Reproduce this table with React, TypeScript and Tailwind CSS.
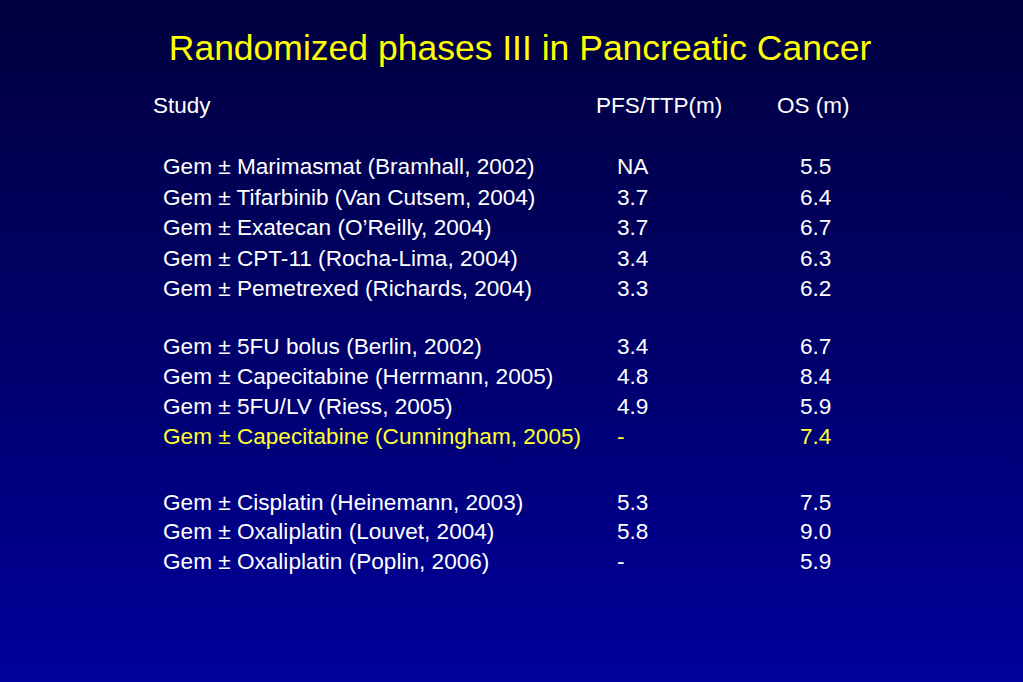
import React from 'react';

type Row = {
  study: string;
  pfs: string;
  os: string;
  highlight?: boolean;
};

const groups: { rows: Row[]; gap: string; rowH: string }[] = [
  {
    gap: 'mt-[31px]',
    rowH: 'h-[30.5px] leading-[30.5px]',
    rows: [
      { study: 'Gem ± Marimasmat (Bramhall, 2002)', pfs: 'NA', os: '5.5' },
      { study: 'Gem ± Tifarbinib (Van Cutsem, 2004)', pfs: '3.7', os: '6.4' },
      { study: 'Gem ± Exatecan (O’Reilly, 2004)', pfs: '3.7', os: '6.7' },
      { study: 'Gem ± CPT-11 (Rocha-Lima, 2004)', pfs: '3.4', os: '6.3' },
      { study: 'Gem ± Pemetrexed (Richards, 2004)', pfs: '3.3', os: '6.2' },
    ],
  },
  {
    gap: 'mt-[27px]',
    rowH: 'h-[30px] leading-[30px]',
    rows: [
      { study: 'Gem ± 5FU bolus (Berlin, 2002)', pfs: '3.4', os: '6.7' },
      { study: 'Gem ± Capecitabine (Herrmann, 2005)', pfs: '4.8', os: '8.4' },
      { study: 'Gem ± 5FU/LV (Riess, 2005)', pfs: '4.9', os: '5.9' },
      { study: 'Gem ± Capecitabine (Cunningham, 2005)', pfs: '-', os: '7.4', highlight: true },
    ],
  },
  {
    gap: 'mt-[36px]',
    rowH: 'h-[29.5px] leading-[29.5px]',
    rows: [
      { study: 'Gem ± Cisplatin (Heinemann, 2003)', pfs: '5.3', os: '7.5' },
      { study: 'Gem ± Oxaliplatin (Louvet, 2004)', pfs: '5.8', os: '9.0' },
      { study: 'Gem ± Oxaliplatin (Poplin, 2006)', pfs: '-', os: '5.9' },
    ],
  },
];

export default function App() {
  return (
    <div className="h-screen w-full overflow-hidden bg-linear-to-b from-[#00003e] to-[#00009c] pt-[28px] font-['Liberation_Sans',Arial,sans-serif]">
      {/* Title */}
      <h1 className="h-[40px] pl-[17px] text-center text-[35.5px] leading-[40px] text-[#ffff00]">
        Randomized phases III in Pancreatic Cancer
      </h1>

      {/* Column headers */}
      <div className="mt-[23px] flex h-[30px] pl-[153px] text-[22.5px] leading-[30px] text-white">
        <div className="w-[443px]">Study</div>
        <div className="w-[181px]">PFS/TTP(m)</div>
        <div>OS (m)</div>
      </div>

      {/* Table body */}
      {groups.map((g, gi) => (
        <div key={gi} className={g.gap}>
          {g.rows.map((r, ri) => (
            <div
              key={ri}
              className={`flex pl-[163px] text-[22.6px] ${g.rowH} ${r.highlight ? 'text-[#ffff33]' : 'text-white'}`}
            >
              <div className="w-[454px] whitespace-nowrap">{r.study}</div>
              <div className="w-[183px]">{r.pfs}</div>
              <div>{r.os}</div>
            </div>
          ))}
        </div>
      ))}
    </div>
  );
}
